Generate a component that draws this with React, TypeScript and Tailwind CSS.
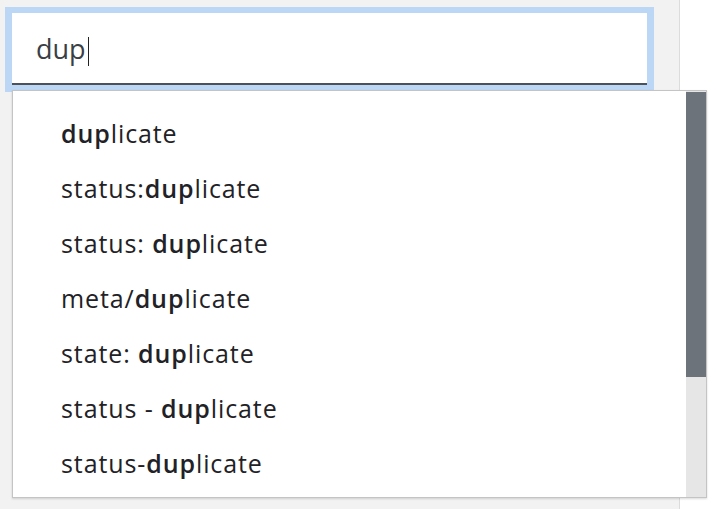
import { useState } from 'react';

const suggestions: [string, string, string][] = [
  ['', 'dup', 'licate'],
  ['status:', 'dup', 'licate'],
  ['status: ', 'dup', 'licate'],
  ['meta/', 'dup', 'licate'],
  ['state: ', 'dup', 'licate'],
  ['status - ', 'dup', 'licate'],
  ['status-', 'dup', 'licate'],
];

export default function App() {
  const [query, setQuery] = useState('dup');

  return (
    <main className="flex h-[509px] w-[720px] overflow-hidden bg-white">
      <div className="relative h-full w-[680px] border-r border-[#dcdcdc] bg-[#f2f2f2]">
        <div className="relative ml-[5px] mt-[7px] w-[649px] border-[7px] border-t-[6px] border-[#bcd6f6] bg-white">
          <input
            autoFocus
            value={query}
            onChange={(e) => setQuery(e.target.value)}
            className="h-[72px] w-full border-b-2 border-[#4d5259] bg-white pl-[24px] pr-[24px] font-['Open_Sans',sans-serif] text-[27px] text-[#3a3f45] caret-transparent outline-none"
          />
          {/* caret */}
          <span className="pointer-events-none absolute left-[76px] top-[24px] h-[29px] w-px bg-[#222]" />
        </div>

        <div className="absolute left-[12px] top-[90px] z-10 flex h-[408px] w-[695px] border border-[#c4c4c4] bg-white shadow-[0_1px_2px_rgba(0,0,0,0.15)]">
          <ul className="flex-1 overflow-hidden pt-[15px] font-['Open_Sans',sans-serif]">
            {suggestions.map(([pre, match, post], i) => (
              <li
                key={i}
                className="flex h-[55px] items-center whitespace-pre pl-[48px] text-[25px] tracking-[0.9px] text-[#1f2226]"
              >
                {pre}
                <b className="font-semibold">{match}</b>
                {post}
              </li>
            ))}
          </ul>
          <div className="flex w-[20px] flex-col bg-[#e6e6e6]">
            <div className="mt-[1px] h-[285px] bg-[#6d737a]" />
          </div>
        </div>
      </div>
    </main>
  );
}
